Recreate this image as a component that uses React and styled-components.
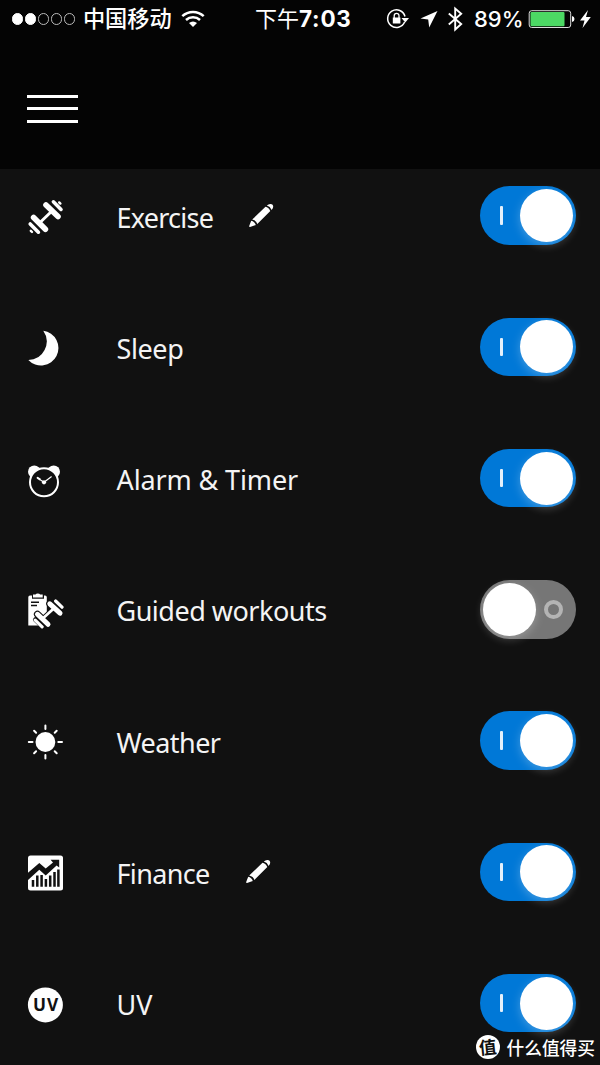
import React from "react";
import styled, { createGlobalStyle } from "styled-components";

const GlobalStyle = createGlobalStyle`
  body {
    margin: 0;
    background: #111;
    overflow: hidden;
  }
`;

const Screen = styled.div`
  position: relative;
  width: 600px;
  height: 1065px;
  overflow: hidden;
  background: #111;
  color: #fff;
  font-family: "Noto Sans", "Noto Sans CJK SC", sans-serif;
`;

const Header = styled.header`
  height: 169px;
  background: #040404;
`;

const StatusBar = styled.div`
  display: flex;
  align-items: center;
  height: 38px;
  padding-left: 11.5px;
  white-space: nowrap;
  font-family: Inter, "Noto Sans CJK SC", sans-serif;
`;

const Signal = styled.div`
  display: flex;
  gap: 2px;
  margin-right: 7.5px;
`;

const SignalDot = styled.span`
  box-sizing: border-box;
  width: 11.2px;
  height: 11.2px;
  border: 1px solid ${props => (props.$on ? "#fff" : "#bbb")};
  border-radius: 50%;
  background: ${props => (props.$on ? "#fff" : "transparent")};
`;

const Carrier = styled.span`
  width: 98px;
  font-size: 22.2px;
  font-weight: 500;
  line-height: 30px;
`;

const Time = styled.span`
  width: 100px;
  margin: 0 31px 0 50px;
  font-size: 22.5px;
  font-weight: 700;
  line-height: 30px;
  letter-spacing: 0.8px;
`;

const TimePrefix = styled.span`
  font-size: 22px;
  font-weight: 400;
  letter-spacing: 0;
`;

const Percent = styled.span`
  width: 53px;
  margin-left: 10px;
  font-size: 22px;
  font-weight: 500;
`;

const MenuButton = styled.button`
  display: flex;
  flex-direction: column;
  gap: 9.7px;
  margin: 56.7px 0 0 27px;
  padding: 0;
  border: 0;
  background: none;
`;

const MenuLine = styled.span`
  width: 51px;
  height: 3px;
  background: #fff;
`;

const Row = styled.div`
  box-sizing: border-box;
  display: flex;
  align-items: flex-start;
  height: 131.25px;
  padding: 17.4px 24px 0 27px;
`;

const TileIcon = styled.svg`
  flex: none;
  width: 37px;
  height: 37px;
  margin-top: 12.8px;
`;

const Label = styled.span`
  margin: 12.3px 0 0 52.5px;
  color: #f4f4f4;
  font-family: "Noto Sans", sans-serif;
  font-size: 27px;
  line-height: 38px;
  white-space: nowrap;
  letter-spacing: ${props => props.$spacing || 0}px;
  width: ${props => (props.$width ? `${props.$width}px` : "auto")};
`;

const EditIcon = styled.svg`
  width: 26px;
  height: 26px;
  margin-top: 16.6px;
`;

const Toggle = styled.div`
  box-sizing: border-box;
  display: flex;
  flex: none;
  flex-direction: ${props => (props.$on ? "row" : "row-reverse")};
  align-items: center;
  justify-content: space-between;
  width: 96px;
  height: 58.5px;
  margin-left: auto;
  padding: ${props => (props.$on ? "0 3px 0 20.4px" : "0 13px 0 2.5px")};
  border-radius: 30px;
  background: ${props => (props.$on ? "#0078d7" : "#767676")};
`;

const Knob = styled.span`
  width: 53px;
  height: 53px;
  border-radius: 50%;
  background: #fff;
  box-shadow: 0 3px 10px rgba(255, 255, 255, 0.25);
`;

const OnMark = styled.span`
  width: 3px;
  height: 18.5px;
  border-radius: 1px;
  background: #e4f0fb;
`;

const OffMark = styled.span`
  box-sizing: border-box;
  width: 19px;
  height: 19px;
  border: 4px solid #b4b4b4;
  border-radius: 50%;
`;

const Watermark = styled.div`
  position: absolute;
  right: 5px;
  bottom: 5.5px;
  display: flex;
  align-items: center;
  gap: 7px;
  font-family: "Noto Sans CJK SC", sans-serif;
  font-size: 17.7px;
  font-weight: 500;
  line-height: 26px;
`;

const WatermarkBadge = styled.span`
  width: 24px;
  height: 24px;
  border-radius: 50%;
  background: #fff;
  color: #111;
  font-size: 17.5px;
  font-weight: 700;
  line-height: 23px;
  text-align: center;
`;

const BadgeGlyph = styled.span`
  display: inline-block;
  transform: rotate(-6deg);
`;

function Exercise() {
  return (
    <g fill="none" stroke="#fff" strokeLinecap="round">
      <path d="M13 23.5 25 12" strokeWidth="3" />
      <path d="M6.6 18.5 18.4 30.2M19 6 31 17.6" strokeWidth="5.6" />
      <path d="M3.2 25 11.4 33.2M26.4 2.8 34 10.4" strokeWidth="3.6" />
      <path d="M3.8 31.8 5 33M32.2 3.4 33.4 4.6" strokeWidth="2.4" />
    </g>
  );
}

function Sleep() {
  return <path fill="#fff" d="M16.3.8A17.4 17.4 0 1 1 1.3 29.9 18.5 18.5 0 0 0 16.3.8Z" />;
}

function Alarm() {
  return (
    <>
      <circle cx="7.3" cy="9.7" r="6.3" fill="#fff" />
      <circle cx="26.7" cy="9.7" r="6.3" fill="#fff" />
      <circle cx="17" cy="20.3" r="14" fill="#111" stroke="#fff" strokeWidth="2" />
      <path d="m17 20.3-3.5-2.4M17 20.3l7.6-5.8" stroke="#fff" strokeWidth="1.2" />
      <path d="m10.6 15.9 2.3 1.5" stroke="#fff" strokeWidth="2" strokeLinecap="round" />
      <circle cx="17" cy="20.3" r="2.1" fill="#fff" />
    </>
  );
}

function Guided() {
  return (
    <>
      <path fill="#fff" d="M1.3 4.2Q1.3 2.4 3 2.4h2v3.3h12V2.4h1q1.8 0 1.8 1.8V23l-9 9.5H1.3Z" />
      <path fill="#fff" d="M6 1.6h2.5Q9 .4 10.8.4t2.3 1.2h2.6v2.9H6Z" />
      <path d="M4 9.2h8M4 12.5h6" stroke="#111" strokeWidth="1.4" />
      <g fill="none" strokeLinecap="round">
        <path d="m10.5 21.3 10.5 10M22.8 10.8l10.2 9.4" stroke="#111" strokeWidth="7.2" />
        <path d="m8.5 26.7 6.9 6.5" stroke="#111" strokeWidth="5" />
        <path d="m16 25.2 11-10" stroke="#111" strokeWidth="4.500" />
        <path d="m16 25.2 11-10" stroke="#fff" strokeWidth="2.8" />
        <path d="m10.5 21.3 10.5 10M22.8 10.8l10.2 9.4" stroke="#fff" strokeWidth="5" />
        <path d="m8.2 27.1 6.9 6.700M28.600 8l6.400 6.200" stroke="#fff" strokeWidth="3.200" />
      </g>
    </>
  );
}

function Weather() {
  return (
    <>
      <circle cx="18.4" cy="18" r="9.9" fill="#fff" />
      <path
        d="M18.4 1.4v3.7M18.4 30.9v3.7M1.8 18h3.7M31.3 18h3.700M7.100 6.700l2 2M27.700 27.300l2 2M7.100 29.300l2-2M27.700 8.700l2-2"
        stroke="#fff"
        strokeWidth="2"
        strokeLinecap="round"
      />
    </>
  );
}

function Finance() {
  return (
    <>
      <rect x="1" y=".5" width="35" height="35" rx="2.5" fill="#fff" />
      <path
        fill="#111"
        d="M1 17.7 12.3 8 18.7 13.4 26 7.4 23.6 4.8H32.2V12.6L29.6 10.5 18.7 20.4 12.3 14.8 1 25Z"
      />
      <path
        d="M6 25v6.700M10.300 20.500v11.200M14.600 20v11.700M18.900 24v7.700M23.200 20.500v11.200M27.500 17v14.700M31.400 14.500v17.200"
        stroke="#111"
        strokeWidth="2.500"
      />
    </>
  );
}

function UvIndex() {
  return (
    <>
      <circle cx="18.4" cy="17.9" r="17.5" fill="#fff" />
      <text
        x="19"
        y="24.1"
        fill="#111"
        fontFamily="Noto Sans, sans-serif"
        fontSize="17.2"
        fontWeight="700"
        letterSpacing="1"
        textAnchor="middle"
      >
        UV
      </text>
    </>
  );
}

function Pencil() {
  return (
    <EditIcon viewBox="0 0 26 26" fill="#fff">
      <path d="M4.2 16.6 17.5 3.7Q20.5 4.2 22.3 8L9.3 20.9Q8.3 17.6 4.2 16.6Z" />
      <path d="M3.2 17.8Q6.7 18.5 7.8 22.1L2 24Q1 24.1 1.2 23Z" />
      <path d="M18.8 2.5Q20.5.9 22.5 1q2.8.3 2.7 2.8 0 1.6-1.6 3.1-1.300-3.400-4.800-4.400Z" />
    </EditIcon>
  );
}

const tiles = [
  { name: "Exercise", Icon: Exercise, on: true, spacing: -0.75, editAt: 131.5 },
  { name: "Sleep", Icon: Sleep, on: true, spacing: -0.4 },
  { name: "Alarm & Timer", Icon: Alarm, on: true, spacing: -0.12 },
  { name: "Guided workouts", Icon: Guided, on: false, spacing: -0.5 },
  { name: "Weather", Icon: Weather, on: true, spacing: -0.55 },
  { name: "Finance", Icon: Finance, on: true, spacing: -0.65, editAt: 128.5 },
  { name: "UV", Icon: UvIndex, on: true },
];

function StatusIcons() {
  return (
    <svg width="78" height="30" viewBox="386 4 78 30" fill="none" stroke="#fff">
      <path d="M405 16.5a8.800 8.800 0 1 0-.4 5.500" strokeWidth="1.500" />
      <path d="m401.500 18 7.500 0-3.700 4.500Z" fill="#fff" stroke="none" />
      <rect x="392.800" y="17.500" width="7.600" height="6" fill="#fff" stroke="none" />
      <path d="M394.200 18v-2.300a2.400 2.400 0 0 1 4.800 0V18" strokeWidth="1.300" />
      <path d="m437.500 11-17 7.500 7.700.9 1 8Z" fill="#fff" stroke="none" />
      <path d="m448.800 13.500 12.400 10.500-6 5.500V8.500l6 5.300-12.400 10.700" strokeWidth="1.900" />
    </svg>
  );
}

export default function App() {
  return (
    <>
      <GlobalStyle />
      <Screen>
        <Header>
          <StatusBar>
            <Signal>
              {[1, 2, 3, 4, 5].map(n => (
                <SignalDot key={n} $on={n < 3} />
              ))}
            </Signal>
            <Carrier>中国移动</Carrier>
            <svg width="24" height="20" viewBox="0 0 24 20" fill="none" stroke="#fff">
              <path d="M1.3 7.2a15.5 15.5 0 0 1 21.4 0M5 11a10.3 10.3 0 0 1 14 0" strokeWidth="2.5" />
              <path d="M8 14a6 6 0 0 1 8 0l-4 4Z" fill="#fff" stroke="none" />
            </svg>
            <Time>
              <TimePrefix>下午</TimePrefix>7:03
            </Time>
            <StatusIcons />
            <Percent>89%</Percent>
            <svg width="66" height="20" viewBox="527 9 66 20" fill="none">
              <rect x="529.2" y="10.7" width="41.5" height="16.8" rx="2.5" stroke="#ddd" />
              <rect x="530.5" y="12" width="34" height="14.2" rx="1" fill="#4cd964" />
              <path d="M572 16q2.5.5 2.5 3t-2.5 3Z" fill="#fff" />
              <path d="m588 10-8 10.5h4.5l-2 7.5 8.3-11h-4.8Z" fill="#fff" />
            </svg>
          </StatusBar>
          <MenuButton aria-label="Menu">
            <MenuLine />
            <MenuLine />
            <MenuLine />
          </MenuButton>
        </Header>
        {tiles.map(({ name, Icon, on, spacing, editAt }) => (
          <Row key={name}>
            <TileIcon viewBox="0 0 37 37">
              <Icon />
            </TileIcon>
            <Label $spacing={spacing} $width={editAt}>
              {name}
            </Label>
            {editAt && <Pencil />}
            <Toggle $on={on}>
              {on ? <OnMark /> : <OffMark />}
              <Knob />
            </Toggle>
          </Row>
        ))}
        <Watermark>
          <WatermarkBadge>
            <BadgeGlyph>值</BadgeGlyph>
          </WatermarkBadge>
          什么值得买
        </Watermark>
      </Screen>
    </>
  );
}
